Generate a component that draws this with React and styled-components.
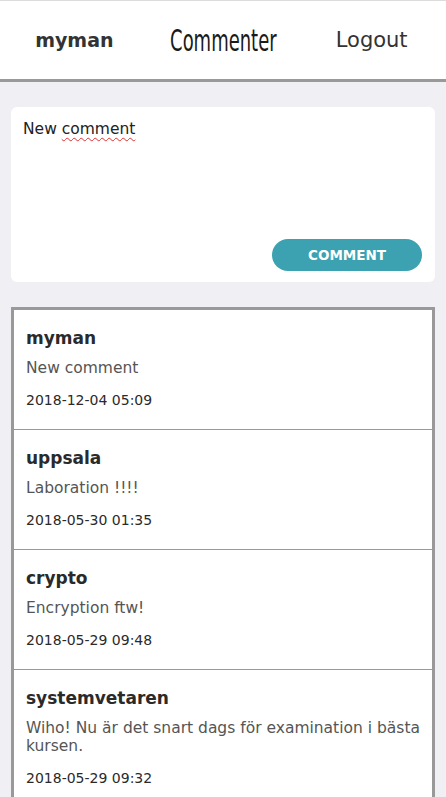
import * as React from 'react';
import styled, { createGlobalStyle } from 'styled-components';

let GlobalStyle = createGlobalStyle`
  html, body {
    margin: 0;
    padding: 0;
    background: #efeff4;
    font-family: "DejaVu Sans", "Open Sans", sans-serif;
    color: #333;
  }
  * {
    box-sizing: border-box;
  }
`;

let Page = styled.div`
  min-height: 797px;
  border-top: 1px solid #dcdcdc;
`;

let Header = styled.header`
  display: grid;
  grid-template-columns: 1fr 1fr 1fr;
  align-items: center;
  height: 81px;
  background: #fff;
  border-bottom: 3px solid #999;
`;

let HeaderItem = styled.div`
  text-align: center;
  font-size: ${p => p.size || 19}px;
  font-weight: ${p => (p.bold ? 700 : 400)};
  color: ${p => p.color || '#333'};
`;

let Brand = styled(HeaderItem)`
  font-family: "DejaVu Sans Condensed", "Roboto", sans-serif;
  font-size: 27px;
  color: #1a1a1a;
  transform: scale(0.74, 1.12);
`;

let Main = styled.main`
  padding: 25px 11px;
`;

let FormCard = styled.div`
  background: #fff;
  border-radius: 6px;
  padding: 12px 13px 11px 12px;
  display: flex;
  flex-direction: column;
`;

let Input = styled.div`
  height: 108px;
  margin-bottom: 12px;
  font-size: 15.5px;
  line-height: 20px;
  color: #222;
`;

let Misspelled = styled.span`
  text-decoration: underline wavy #e03030;
  text-decoration-thickness: 1px;
  text-underline-offset: 3px;
`;

let Button = styled.button`
  align-self: flex-end;
  width: 150px;
  height: 32px;
  border: none;
  border-radius: 16px;
  background: #3ca1b0;
  color: #fff;
  font-family: inherit;
  font-weight: 700;
  font-size: 13.5px;
  cursor: pointer;
`;

let CommentList = styled.ul`
  list-style: none;
  margin: 25px 0 0;
  padding: 0;
  background: #fff;
  border: 3px solid #999;
`;

let CommentItem = styled.li`
  padding: 17px 12px 20px 12px;
  & + & {
    border-top: 1px solid #999;
  }
`;

let Name = styled.div`
  font-size: 17px;
  font-weight: 700;
  line-height: 22px;
  color: #2a2a2a;
  margin-bottom: 10px;
`;

let Message = styled.div`
  font-size: 15.5px;
  line-height: 18px;
  color: #555;
  margin-bottom: 14px;
`;

let Date = styled.div`
  font-size: 14px;
  line-height: 18px;
  color: #2a2a2a;
`;

let comments = [
  { user: 'myman', text: 'New comment', date: '2018-12-04 05:09' },
  { user: 'uppsala', text: 'Laboration !!!!', date: '2018-05-30 01:35' },
  { user: 'crypto', text: 'Encryption ftw!', date: '2018-05-29 09:48' },
  {
    user: 'systemvetaren',
    text: 'Wiho! Nu är det snart dags för examination i bästa kursen.',
    date: '2018-05-29 09:32'
  }
];

export default function App() {
  return (
    <Page>
      <GlobalStyle />
      <Header>
        <HeaderItem bold size={19}>myman</HeaderItem>
        <Brand>Commenter</Brand>
        <HeaderItem size={21}>Logout</HeaderItem>
      </Header>
      <Main>
        <FormCard>
          <Input>
            New <Misspelled>comment</Misspelled>
          </Input>
          <Button>COMMENT</Button>
        </FormCard>
        <CommentList>
          {comments.map(c => (
            <CommentItem key={c.date}>
              <Name>{c.user}</Name>
              <Message>{c.text}</Message>
              <Date>{c.date}</Date>
            </CommentItem>
          ))}
        </CommentList>
      </Main>
    </Page>
  );
}
